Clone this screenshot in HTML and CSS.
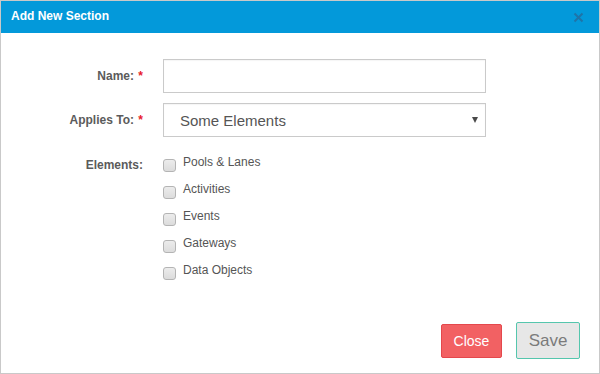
FILE: index.html
```html
<!DOCTYPE html>
<html lang="en">

<head>
    <meta charset="UTF-8">
    <meta name="viewport" content="width=device-width, initial-scale=1.0">
    <title>Add New Section</title>
    <link rel="stylesheet" href="styles.css">
</head>

<body>

    <div class="dialog">
        <div class="dialog-header">
            <span class="dialog-title">Add New Section</span>
            <button type="button" class="close-x" aria-label="Close">
                <svg width="11" height="11" viewBox="0 0 11 11">
                    <path d="M1.5 1.5 L9.5 9.5 M9.5 1.5 L1.5 9.5" stroke="#1f74a8" stroke-width="2" fill="none" />
                </svg>
            </button>
        </div>

        <form class="dialog-body" id="sectionForm">
            <label class="field-label" for="sectionName">Name: <span class="req">*</span></label>
            <input type="text" id="sectionName" class="field-input">

            <label class="field-label" for="appliesTo">Applies To: <span class="req">*</span></label>
            <div class="select-wrap">
                <select id="appliesTo" class="field-input field-select">
                    <option>All Elements</option>
                    <option selected>Some Elements</option>
                </select>
            </div>

            <span class="field-label label-top">Elements:</span>
            <ul class="check-list">
                <li><label><input type="checkbox"> <span>Pools &amp; Lanes</span></label></li>
                <li><label><input type="checkbox"> <span>Activities</span></label></li>
                <li><label><input type="checkbox"> <span>Events</span></label></li>
                <li><label><input type="checkbox"> <span>Gateways</span></label></li>
                <li><label><input type="checkbox"> <span>Data Objects</span></label></li>
            </ul>
        </form>

        <div class="dialog-footer">
            <button type="button" class="btn btn-close">Close</button>
            <button type="button" class="btn btn-save">Save</button>
        </div>
    </div>

</body>

</html>
```

FILE: styles.css
```css
* {
    box-sizing: border-box;
}

body {
    margin: 0;
    font-family: "Liberation Sans", Arial, sans-serif;
    background: #fff;
}

.dialog {
    width: 600px;
    height: 374px;
    border: 1px solid #c9c9c9;
    display: flex;
    flex-direction: column;
}

.dialog-header {
    height: 32px;
    background: #0399da;
    display: flex;
    align-items: center;
    justify-content: space-between;
    padding: 0 15px 0 10px;
}

.dialog-title {
    color: #fff;
    font-weight: bold;
    font-size: 12px;
    margin-top: -2px;
}

.close-x {
    border: none;
    background: none;
    padding: 0;
    width: 11px;
    height: 11px;
    display: flex;
    cursor: pointer;
}

.dialog-body {
    flex: 1;
    display: grid;
    grid-template-columns: 142px 323px;
    column-gap: 20px;
    row-gap: 10px;
    align-content: start;
    align-items: center;
    padding-top: 26px;
    margin: 0;
}

.field-label {
    text-align: right;
    font-size: 12px;
    font-weight: bold;
    color: #5b5b5b;
}

.req {
    color: #e8192c;
    margin-left: 1px;
}

.label-top {
    align-self: start;
    margin-top: 11px;
}

.field-input {
    height: 34px;
    width: 100%;
    border: 1px solid #cacaca;
    border-radius: 0;
    box-shadow: inset 0 1px 1px rgba(0, 0, 0, 0.04);
    background: #fff;
    font-family: "Liberation Sans", Arial, sans-serif;
    font-size: 15px;
    color: #555;
    padding: 0 16px;
    margin: 0;
}

.select-wrap {
    position: relative;
}

.field-select {
    appearance: none;
    -webkit-appearance: none;
}

.select-wrap:after {
    content: "";
    position: absolute;
    right: 8px;
    top: 14px;
    border-left: 3.5px solid transparent;
    border-right: 3.5px solid transparent;
    border-top: 6px solid #4a4a4a;
    pointer-events: none;
}

.check-list {
    list-style: none;
    margin: 8px 0 0;
    padding: 0;
}

.check-list li {
    height: 27px;
}

.check-list label {
    display: flex;
    align-items: flex-start;
    font-size: 12px;
    color: #555;
    line-height: 14px;
}

.check-list input {
    appearance: none;
    -webkit-appearance: none;
    width: 13px;
    height: 13px;
    margin: 4px 7px 0 0;
    border: 1px solid #b4b4b4;
    border-radius: 3px;
    background: linear-gradient(#ececec, #dcdcdc);
}

.dialog-footer {
    display: flex;
    justify-content: flex-end;
    align-items: center;
    gap: 14px;
    padding: 0 19px 14px;
}

.btn {
    font-family: "Liberation Sans", Arial, sans-serif;
    cursor: pointer;
    border-radius: 2px;
}

.btn-close {
    width: 61px;
    height: 34px;
    background: #f26163;
    border: 1px solid #e4484c;
    color: #fff;
    font-size: 14px;
}

.btn-save {
    width: 64px;
    height: 37px;
    background: #e7e7e7;
    border: 1px solid #55c6ad;
    color: #7b7b7b;
    font-size: 17px;
}
```
